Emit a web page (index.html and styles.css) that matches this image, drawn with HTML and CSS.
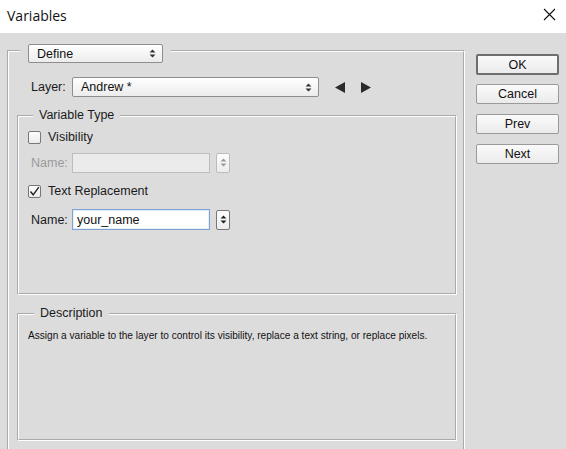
FILE: index.html
```html
<!DOCTYPE html>
<html>
<head>
<meta charset="utf-8">
<link rel="stylesheet" href="styles.css">
</head>
<body>
<div class="window">
  <div class="titlebar">
    <span class="title">Variables</span>
    <svg class="close" width="13" height="13" viewBox="0 0 13 13"><path d="M1 1L12 12M12 1L1 12" stroke="#111" stroke-width="1.1" fill="none"/></svg>
  </div>
  <div class="body">
    <fieldset class="group outer">
      <legend class="outer-legend">
        <div class="select define"><span>Define</span><svg class="updown" width="7" height="9" viewBox="0 0 7 9"><path d="M3.5 0.5L6.5 3.5H0.5Z M3.5 8.5L6.5 5.5H0.5Z" fill="#333"/></svg></div>
      </legend>
      <div class="layer-row">
        <span class="label">Layer:</span>
        <div class="select layer"><span>Andrew *</span><svg class="updown" width="7" height="9" viewBox="0 0 7 9"><path d="M3.5 0.5L6.5 3.5H0.5Z M3.5 8.5L6.5 5.5H0.5Z" fill="#333"/></svg></div>
        <svg class="arrow" width="10" height="11" viewBox="0 0 10 11"><path d="M0 5.5L10 0V11Z" fill="#2a2a2a"/></svg>
        <svg class="arrow" width="10" height="11" viewBox="0 0 10 11"><path d="M10 5.5L0 0V11Z" fill="#2a2a2a"/></svg>
      </div>
      <fieldset class="group inner vartype">
        <legend class="inner-legend">Variable Type</legend>
        <div class="check-row first">
          <span class="checkbox"></span><span class="check-label">Visibility</span>
        </div>
        <div class="name-row disabled">
          <span class="label">Name:</span>
          <span class="input"></span>
          <span class="spin"><svg width="7" height="9" viewBox="0 0 7 9"><path d="M3.5 0.5L6.5 3.5H0.5Z M3.5 8.5L6.5 5.5H0.5Z" fill="#999"/></svg></span>
        </div>
        <div class="check-row second">
          <span class="checkbox checked"><svg width="13" height="13" viewBox="0 0 13 13"><path d="M2.5 6.5L5.2 9.8L10.8 2.2" stroke="#222" stroke-width="1.4" fill="none"/></svg></span><span class="check-label">Text Replacement</span>
        </div>
        <div class="name-row">
          <span class="label">Name:</span>
          <span class="input active">your_name</span>
          <span class="spin"><svg width="7" height="9" viewBox="0 0 7 9"><path d="M3.5 0.5L6.5 3.5H0.5Z M3.5 8.5L6.5 5.5H0.5Z" fill="#222"/></svg></span>
        </div>
      </fieldset>
      <fieldset class="group inner desc">
        <legend class="inner-legend desc-legend">Description</legend>
        <p class="desc-text">Assign a variable to the layer to control its visibility, replace a text string, or replace pixels.</p>
      </fieldset>
    </fieldset>
    <div class="buttons">
      <div class="btn default">OK</div>
      <div class="btn">Cancel</div>
      <div class="btn">Prev</div>
      <div class="btn">Next</div>
    </div>
  </div>
</div>
</body>
</html>
```
FILE: styles.css
```css
html, body {
  margin: 0;
  padding: 0;
}
body {
  width: 566px;
  height: 449px;
  overflow: hidden;
  background: #dddcdd;
  font-family: "Liberation Sans", Arial, sans-serif;
  font-size: 12.5px;
  color: #1a1a1a;
}
.window {
  display: flex;
  flex-direction: column;
  height: 449px;
}
.titlebar {
  height: 33px;
  flex: none;
  background: #ffffff;
  display: flex;
  align-items: center;
  justify-content: space-between;
  padding: 0 10px 0 7px;
}
.title {
  font-family: "Open Sans", "Noto Sans", sans-serif;
  font-size: 14px;
  color: #111;
  margin-top: -2px;
}
.close {
  margin-top: -5px;
}
.body {
  flex: 1;
  display: flex;
  align-items: flex-start;
  padding: 5px 0 0 7px;
}
.group {
  border: 2px groove #fefefe;
  margin: 0;
  padding: 0;
  min-width: 0;
}
.outer {
  width: 458px;
  box-sizing: border-box;
  height: 430px;
}
.outer-legend {
  margin-left: 11px;
  padding: 6px 8px 0;
}
.select {
  display: flex;
  align-items: center;
  justify-content: space-between;
  box-sizing: border-box;
  height: 20px;
  border: 1px solid #8e8e8e;
  border-radius: 2px;
  background: linear-gradient(#ffffff, #ececec);
  padding: 0 6px 0 8px;
  font-size: 12.5px;
  color: #111;
}
.define {
  width: 135px;
  height: 19px;
}
.layer {
  width: 247px;
}
.layer-row {
  display: flex;
  align-items: center;
  margin-top: 14px;
  margin-left: 22px;
  height: 20px;
}
.label {
  width: 41px;
  flex: none;
  font-size: 12.5px;
}
.arrow {
  margin-left: 16px;
}
.arrow + .arrow {
  margin-left: 16px;
}
.inner {
  width: 440px;
  box-sizing: border-box;
  margin-left: 8px;
}
.vartype {
  margin-top: 11px;
  height: 187px;
}
.inner-legend {
  margin-left: 14px;
  padding: 0 6px;
  font-size: 12.5px;
  line-height: 15px;
}
.check-row {
  display: flex;
  align-items: center;
  margin-left: 9px;
  height: 16px;
  margin-top: 9px;
}
.check-row.first {
  margin-top: 6px;
}
.check-row.second {
  margin-top: 10px;
}
.checkbox {
  width: 13px;
  height: 13px;
  box-sizing: border-box;
  border: 1px solid #777;
  border-radius: 2px;
  background: linear-gradient(#fdfdfd, #ececec);
  flex: none;
  position: relative;
}
.checkbox svg {
  position: absolute;
  left: -1px;
  top: -1px;
}
.check-label {
  margin-left: 7px;
  font-size: 12.5px;
}
.name-row {
  display: flex;
  align-items: center;
  margin-left: 12px;
  margin-top: 10px;
  height: 21px;
}
.name-row.disabled {
  margin-top: 7px;
}
.name-row.disabled .label {
  color: #9a9a9a;
}
.input {
  width: 138px;
  height: 20px;
  box-sizing: border-box;
  border: 1px solid #bdbdbd;
  background: #ebebeb;
  flex: none;
  display: flex;
  align-items: center;
  padding-left: 4px;
  font-size: 12.5px;
  color: #111;
}
.input.active {
  height: 21px;
  background: #ffffff;
  border: 1px solid #7fa2d4;
  box-shadow: inset 0 0 0 1px #e6eef9;
}
.spin {
  width: 14px;
  height: 20px;
  box-sizing: border-box;
  margin-left: 6px;
  border: 1px solid #a8a8a8;
  border-radius: 2px;
  background: linear-gradient(#fdfdfd, #ececec);
  display: flex;
  align-items: center;
  justify-content: center;
}
.name-row:not(.disabled) .spin {
  border-color: #777;
}
.disabled .spin {
  border-color: #bcbcbc;
}
.desc {
  margin-top: 11px;
  height: 135px;
}
.desc-legend {
  margin-left: 15px;
}
.desc-text {
  margin: 9px 0 0 9px;
  font-size: 10.1px;
  color: #111;
}
.buttons {
  display: flex;
  flex-direction: column;
  gap: 10px;
  margin-left: 11px;
  margin-top: 16px;
}
.btn {
  width: 83px;
  height: 20px;
  box-sizing: border-box;
  border: 1px solid #9a9a9a;
  border-radius: 2px;
  background: linear-gradient(#fafafa, #ebebeb);
  display: flex;
  align-items: center;
  justify-content: center;
  font-size: 12.5px;
  color: #111;
}
.btn.default {
  height: 21px;
  border: 2px solid #6e6e6e;
  margin-bottom: -1px;
}
```
